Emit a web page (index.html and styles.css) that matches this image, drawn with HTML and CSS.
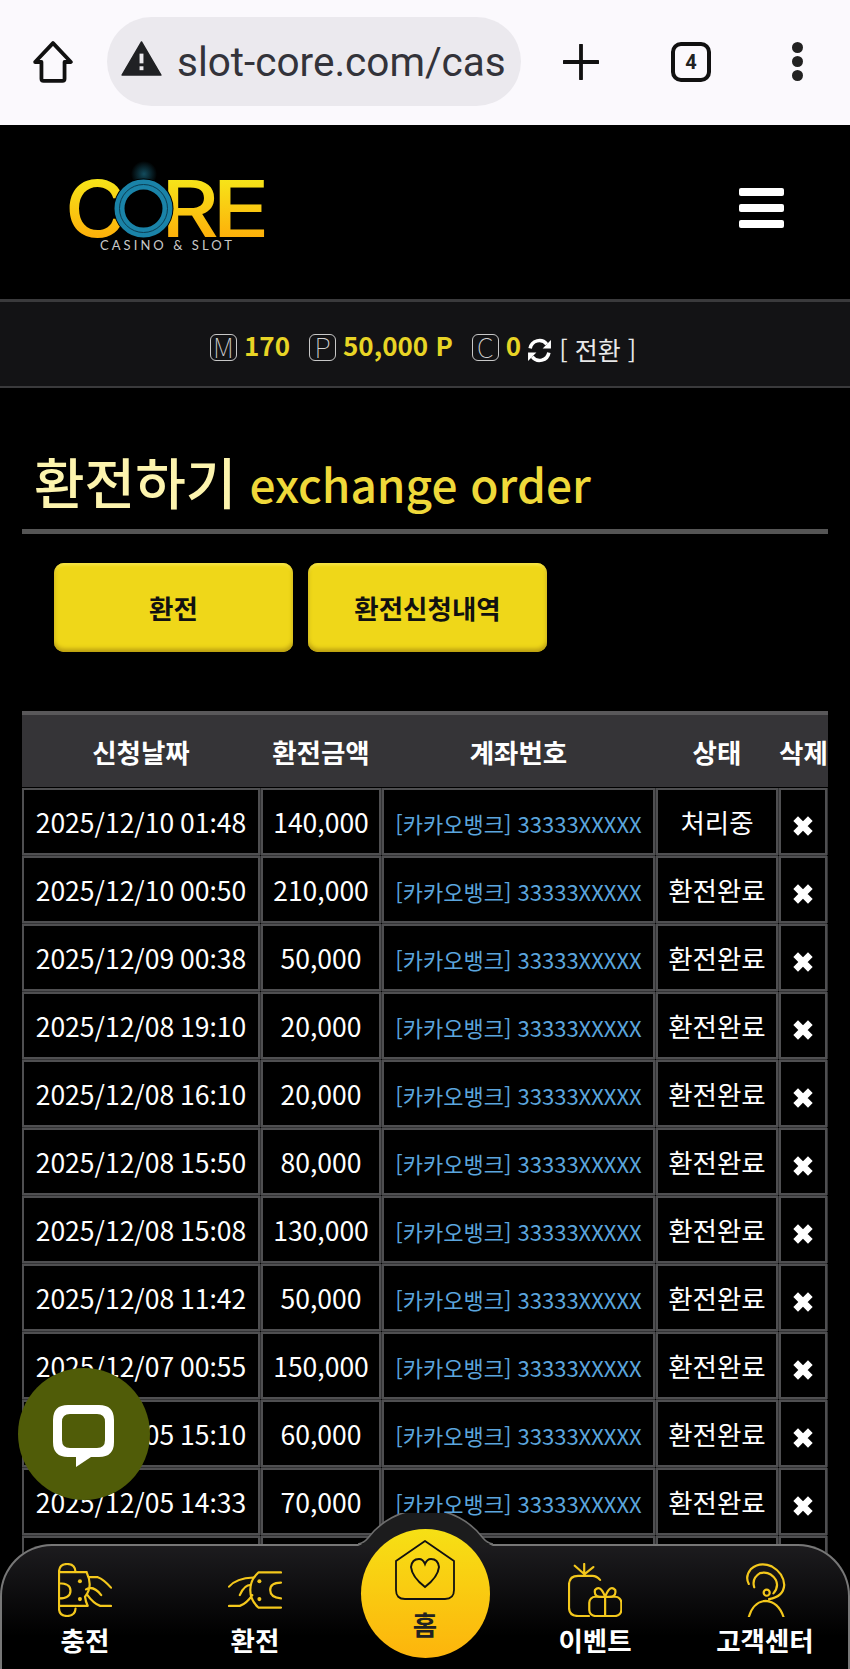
FILE: index.html
```html
<!DOCTYPE html>
<html lang="ko">
<head>
<meta charset="utf-8">
<title>환전하기</title>
<link rel="stylesheet" href="styles.css">
</head>
<body>
<svg class="defs" width="0" height="0">
  <symbol id="del" viewBox="0 0 18 18"><path d="M3 3L15 15M15 3L3 15" fill="none" stroke="#fff" stroke-width="5.4"/></symbol>
</svg>

<div class="browser">
  <svg class="b-home" viewBox="0 0 40 40"><path d="M20 2L37 20H31V36Q31 38 29 38H11Q9 38 9 36V20H3Z" fill="none" stroke="#111" stroke-width="3.6" stroke-linejoin="round"/></svg>
  <div class="urlbar">
    <svg class="b-warn" viewBox="0 0 42 36"><path d="M21 1L41 35H1Z" fill="#202124" stroke="#202124" stroke-width="1.5" stroke-linejoin="round"/><rect x="19" y="13" width="4" height="10" fill="#ebe9ee"/><rect x="19" y="26" width="4" height="4" fill="#ebe9ee"/></svg>
    <span class="url">slot-core.com/cas</span>
  </div>
  <svg class="b-plus" viewBox="0 0 34 34"><path d="M17 1V33M1 17H33" stroke="#111" stroke-width="3.6" stroke-linecap="round"/></svg>
  <div class="tabs">4</div>
  <div class="dots"><i></i><i></i><i></i></div>
</div>

<header class="top">
  <svg class="logo" width="210" height="110" viewBox="0 -15 210 110">
    <defs>
      <linearGradient id="lg" x1="0" y1="0" x2="0" y2="1"><stop offset="0.15" stop-color="#f6e81a"/><stop offset="0.8" stop-color="#fdb00a"/></linearGradient>
      <radialGradient id="glow"><stop offset="0" stop-color="#1f7f9c" stop-opacity="0.6"/><stop offset="1" stop-color="#1f7f9c" stop-opacity="0"/></radialGradient>
    </defs>
    <circle cx="80" cy="14" r="13" fill="url(#glow)"/>
    <text class="logo-l" x="1" y="77" textLength="62" lengthAdjust="spacingAndGlyphs" fill="url(#lg)">C</text>
    <text class="logo-l" x="97" y="77" textLength="58" lengthAdjust="spacingAndGlyphs" fill="url(#lg)">R</text>
    <text class="logo-l" x="148" y="77" textLength="58" lengthAdjust="spacingAndGlyphs" fill="url(#lg)">E</text>
    <circle cx="79.5" cy="48.5" r="30" fill="#000"/>
    <circle cx="79.5" cy="48.5" r="24" fill="none" stroke="#1a83a8" stroke-width="10"/>
    <circle cx="79.5" cy="48.5" r="24" fill="none" stroke="#0b3d52" stroke-width="1"/>
    <text class="logo-s" x="36" y="90" textLength="132">CASINO &amp; SLOT</text>
  </svg>
  <div class="burger"><i></i><i></i><i></i></div>
</header>

<div class="balance">
  <span class="tag">M</span><b class="amt">170</b>
  <span class="tag">P</span><b class="amt">50,000 P</b>
  <span class="tag">C</span><b class="amt last">0</b>
  <svg class="refresh" viewBox="0 0 24 24"><path d="M3 10A9 9 0 0 1 19 6M21 14A9 9 0 0 1 5 18" fill="none" stroke="#fff" stroke-width="3.4"/><path d="M23 2V10H15ZM1 22V14H9Z" fill="#fff"/></svg>
  <span class="swap">[ 전환 ]</span>
</div>

<h2 class="page-title"><span class="ko">환전하기</span> <span class="en">exchange order</span></h2>

<div class="btns">
  <a class="btn">환전</a>
  <a class="btn">환전신청내역</a>
</div>

<table class="list">
  <colgroup><col class="c1"><col class="c2"><col class="c3"><col class="c4"><col class="c5"></colgroup>
  <thead>
    <tr><th>신청날짜</th><th>환전금액</th><th>계좌번호</th><th>상태</th><th>삭제</th></tr>
  </thead>
  <tbody>
    <tr><td>2025/12/10 01:48</td><td>140,000</td><td class="acct">[카카오뱅크] 33333XXXXX</td><td>처리중</td><td class="x"><svg><use href="#del"/></svg></td></tr>
    <tr><td>2025/12/10 00:50</td><td>210,000</td><td class="acct">[카카오뱅크] 33333XXXXX</td><td>환전완료</td><td class="x"><svg><use href="#del"/></svg></td></tr>
    <tr><td>2025/12/09 00:38</td><td>50,000</td><td class="acct">[카카오뱅크] 33333XXXXX</td><td>환전완료</td><td class="x"><svg><use href="#del"/></svg></td></tr>
    <tr><td>2025/12/08 19:10</td><td>20,000</td><td class="acct">[카카오뱅크] 33333XXXXX</td><td>환전완료</td><td class="x"><svg><use href="#del"/></svg></td></tr>
    <tr><td>2025/12/08 16:10</td><td>20,000</td><td class="acct">[카카오뱅크] 33333XXXXX</td><td>환전완료</td><td class="x"><svg><use href="#del"/></svg></td></tr>
    <tr><td>2025/12/08 15:50</td><td>80,000</td><td class="acct">[카카오뱅크] 33333XXXXX</td><td>환전완료</td><td class="x"><svg><use href="#del"/></svg></td></tr>
    <tr><td>2025/12/08 15:08</td><td>130,000</td><td class="acct">[카카오뱅크] 33333XXXXX</td><td>환전완료</td><td class="x"><svg><use href="#del"/></svg></td></tr>
    <tr><td>2025/12/08 11:42</td><td>50,000</td><td class="acct">[카카오뱅크] 33333XXXXX</td><td>환전완료</td><td class="x"><svg><use href="#del"/></svg></td></tr>
    <tr><td>2025/12/07 00:55</td><td>150,000</td><td class="acct">[카카오뱅크] 33333XXXXX</td><td>환전완료</td><td class="x"><svg><use href="#del"/></svg></td></tr>
    <tr><td>2025/12/05 15:10</td><td>60,000</td><td class="acct">[카카오뱅크] 33333XXXXX</td><td>환전완료</td><td class="x"><svg><use href="#del"/></svg></td></tr>
    <tr><td>2025/12/05 14:33</td><td>70,000</td><td class="acct">[카카오뱅크] 33333XXXXX</td><td>환전완료</td><td class="x"><svg><use href="#del"/></svg></td></tr>
    <tr><td></td><td></td><td></td><td></td><td></td></tr>
  </tbody>
</table>

<a class="chat">
  <svg viewBox="0 0 62 62"><path fill-rule="evenodd" fill="#fff" d="M15 0H46Q61 0 61 15V37Q61 52 46 52H38L23 62V52H15Q0 52 0 37V15Q0 0 15 0ZM17 9Q9 9 9 17V35Q9 43 17 43H44Q52 43 52 35V17Q52 9 44 9Z"/></svg>
</a>

<nav class="dock">
  <svg class="bump" viewBox="0 0 135 33"><path d="M0 33Q6 31 10 25A72 72 0 0 1 125 25Q129 31 135 33Z" fill="#1c1c1d"/><path d="M0 31Q6 30 10 25A72 72 0 0 1 125 25Q129 30 135 31" fill="none" stroke="#6e6e6e" stroke-width="1.6"/></svg>
  <a class="dock-item">
    <svg class="ico" viewBox="0 0 160 160"><g fill="none" stroke="#f4c81c" stroke-width="6.5" stroke-linecap="round" stroke-linejoin="round"><path d="M3 27V135M3 27Q3 3 27 3T52 27M3 135Q3 157 27 157T52 135M3 27H85M3 127H85M3 60Q37 60 37 82T3 105M85 28Q105 70 80 100Q82 115 88 127M90 42H118Q135 48 157 73M83 78Q105 65 128 95M85 92Q105 120 125 127H157"/></g><circle cx="65" cy="54" r="6" fill="#f4c81c"/><circle cx="65" cy="107" r="6" fill="#f4c81c"/></svg>
    <span>충전</span>
  </a>
  <a class="dock-item">
    <svg class="ico" viewBox="0 0 160 160"><g fill="none" stroke="#f4c81c" stroke-width="6.5" stroke-linecap="round" stroke-linejoin="round"><path d="M157 28H90Q66 50 66 80T90 132H157M157 58Q125 58 125 80T157 105M3 70Q25 45 75 43M3 127H35Q55 120 72 95M35 95Q48 65 68 65"/></g><circle cx="93" cy="54" r="6" fill="#f4c81c"/><circle cx="93" cy="107" r="6" fill="#f4c81c"/></svg>
    <span>환전</span>
  </a>
  <a class="dock-item home">
    <svg class="ico-home" viewBox="0 0 60 60"><path d="M30 1L59 21V50Q59 59 50 59H10Q1 59 1 50V21Z" fill="none" stroke="#111" stroke-width="1.8" stroke-linejoin="round"/><path d="M30 47Q17 37 16 27Q17 19 24 19Q28 19 30 24Q32 19 36 19Q43 19 44 27Q43 37 30 47Z" fill="none" stroke="#111" stroke-width="2"/></svg>
    <span>홈</span>
  </a>
  <a class="dock-item">
    <svg class="ico" viewBox="0 0 160 160"><g fill="none" stroke="#f4c81c" stroke-width="6.5" stroke-linecap="round" stroke-linejoin="round"><path d="M95 50Q85 38 72 38H30Q3 38 3 65V132Q3 157 30 157H62M47 32L20 8M48 32L48 3M50 32L75 12"/><rect x="63" y="100" width="95" height="57" rx="18"/><path d="M110 100V157M110 100Q75 105 80 80Q95 62 110 100Q125 62 140 80Q145 105 110 100"/></g></svg>
    <span>이벤트</span>
  </a>
  <a class="dock-item">
    <svg class="ico" viewBox="0 0 160 160"><g fill="none" stroke="#f4c81c" stroke-width="6.5" stroke-linecap="round" stroke-linejoin="round"><path d="M32 62Q20 40 38 18Q65 -5 100 10Q135 30 137 65Q135 100 92 107M48 72Q40 45 65 30Q95 22 112 50Q122 70 105 90M32 160Q45 115 82 112Q120 115 135 160"/><circle cx="85" cy="88" r="9"/></g></svg>
    <span>고객센터</span>
  </a>
</nav>
</body>
</html>
```

FILE: styles.css
```css
* {
    box-sizing: border-box;
}
html, body {
    margin: 0;
    padding: 0;
    height: 1669px;
    overflow: hidden;
    background: #000;
    color: #fff;
    font-family: "Noto Sans CJK KR", "Noto Sans", sans-serif;
}
body {
    position: relative;
}
.defs {
    position: absolute;
}

/* browser toolbar */
.browser {
    height: 125px;
    background: #fbf9fd;
    display: flex;
    align-items: center;
    padding-bottom: 2px;
}
.b-home {
    width: 42px;
    height: 42px;
    margin-left: 32px;
}
.urlbar {
    width: 414px;
    height: 89px;
    margin-left: 33px;
    border-radius: 45px;
    background: #ebe9ee;
    display: flex;
    align-items: center;
    padding-left: 14px;
    overflow: hidden;
}
.b-warn {
    width: 41px;
    height: 35px;
    margin-top: -6px;
}
.url {
    margin-left: 15px;
    font-family: Roboto, sans-serif;
    font-size: 40.5px;
    color: #33333a;
    white-space: nowrap;
}
.b-plus {
    width: 36px;
    height: 36px;
    margin-left: 42px;
}
.tabs {
    width: 40px;
    height: 40px;
    margin-left: 72px;
    border: 4px solid #111;
    border-radius: 10px;
    color: #222;
    font: bold 20px/32px Roboto, sans-serif;
    text-align: center;
}
.dots {
    margin-left: 81px;
    display: flex;
    flex-direction: column;
    gap: 3px;
}
.dots i {
    display: block;
    width: 11px;
    height: 11px;
    border-radius: 50%;
    background: #222;
}

/* site header */
.top {
    height: 174px;
    padding: 20px 66px 0 64px;
    display: flex;
    justify-content: space-between;
    align-items: flex-start;
}
.logo-l {
    font-family: Inter, sans-serif;
    font-size: 78px;
    font-weight: 500;
}
.logo-s {
    font-family: Lato, sans-serif;
    font-size: 13px;
    fill: #c9c9c9;
}
.burger {
    margin-top: 43px;
    width: 45px;
    display: flex;
    flex-direction: column;
    gap: 8px;
}
.burger i {
    display: block;
    height: 8px;
    border-radius: 2px;
    background: #fff;
}

/* balance strip */
.balance {
    height: 89px;
    background: #131315;
    border-top: 3px solid #3a3a3c;
    border-bottom: 2px solid #3a3a3c;
    display: flex;
    align-items: center;
    padding-left: 210px;
    padding-top: 10px;
}
.tag {
    width: 27px;
    height: 27px;
    border: 1.5px solid #c8c8c8;
    border-radius: 6px;
    color: #d0d0d0;
    font-size: 27px;
    font-weight: 100;
    line-height: 23px;
    text-align: center;
    margin-top: -4px;
}
.amt {
    margin-left: 7px;
    margin-right: 19px;
    color: #e8d425;
    font-size: 26px;
    line-height: 30px;
    margin-top: -8px;
}
.amt.last {
    margin-right: 6px;
}
.refresh {
    width: 25px;
    height: 25px;
    margin-top: 3px;
}
.swap {
    margin-left: 7px;
    font-size: 25px;
    line-height: 30px;
    color: #e8e8e8;
}

/* page heading */
.page-title {
    height: 146px;
    margin: 0 22px;
    padding: 0 0 17px 12px;
    border-bottom: 5px solid #555;
    font-weight: 500;
    display: flex;
    align-items: flex-end;
    gap: 13px;
}
.ko {
    font-size: 55px;
    line-height: 64px;
    color: #fdf4ae;
}
.en {
    font-size: 46px;
    line-height: 58px;
    color: #efd93a;
}

/* buttons */
.btns {
    margin: 29px 0 0 54px;
    display: flex;
    gap: 15px;
}
.btn {
    width: 239px;
    height: 89px;
    border-radius: 10px;
    background: #efd719;
    box-shadow: inset 0 -3px 4px #b89c10, inset 0 2px 3px #f9e84e;
    color: #111;
    font-size: 26.5px;
    font-weight: 700;
    line-height: 89px;
    text-align: center;
}

/* history table */
.list {
    margin: 62px 0 0 21px;
    width: 807px;
    table-layout: fixed;
    border-collapse: separate;
    border-spacing: 1px;
}
.c1 { width: 238px; }
.c2 { width: 120px; }
.c3 { width: 273px; }
.c4 { width: 122px; }
.c5 { width: 48px; }
.list th {
    height: 72px;
    padding: 0;
    background: #353437;
    box-shadow: 1px 0 0 #353437, 0 -4px 0 #59585a, 1px -4px 0 #59585a;
    font-size: 26.5px;
    font-weight: 700;
    white-space: nowrap;
}
.list td {
    height: 67px;
    padding: 0;
    border: 2px solid #4f4f51;
    box-shadow: 0 1px 0 #333335, 1px 0 0 #333335;
    background: #000;
    text-align: center;
    font-size: 26.5px;
    white-space: nowrap;
}
.list td:first-child {
    /* keeps the colon in the times at full height */
    font-feature-settings: "calt" 0, "locl" 0, "kern" 0, "liga" 0, "ccmp" 0;
}
.list td.acct {
    padding-top: 2px;
    font-size: 22px;
    color: #5ba5dd;
}
.list td.x svg {
    display: block;
    width: 22px;
    height: 22px;
    margin: 8px auto 0;
}

/* floating chat */
.chat {
    position: absolute;
    left: 18px;
    top: 1368px;
    width: 132px;
    height: 132px;
    border-radius: 50%;
    background: #505c08;
    display: flex;
    align-items: center;
    justify-content: center;
}
.chat svg {
    width: 62px;
    height: 62px;
    margin-top: 3px;
}

/* bottom dock */
.dock {
    position: absolute;
    left: 0;
    right: 0;
    top: 1544px;
    height: 135px;
    border-radius: 52px 52px 0 0;
    box-shadow: inset 0 0 0 2px #777;
    background: linear-gradient(#1d1c1f, #000 92px);
    display: grid;
    grid-template-columns: repeat(5, 1fr);
    grid-template-rows: 125px;
    padding-top: 19px;
}
.bump {
    position: absolute;
    left: 358px;
    top: -31px;
    width: 135px;
    height: 33px;
}
.dock-item {
    display: flex;
    flex-direction: column;
    align-items: center;
    font-size: 26.5px;
    font-weight: 700;
    line-height: 34px;
}
.ico {
    width: 54px;
    height: 54px;
    margin-bottom: 6px;
}
.home {
    position: relative;
    height: 129px;
    width: 129px;
    justify-self: center;
    margin-top: -34px;
    border-radius: 50%;
    background: linear-gradient(#f6e015, #fdb40c);
    color: #222;
    padding-top: 11px;
}
.ico-home {
    width: 60px;
    height: 60px;
    margin-bottom: 7px;
}
```
